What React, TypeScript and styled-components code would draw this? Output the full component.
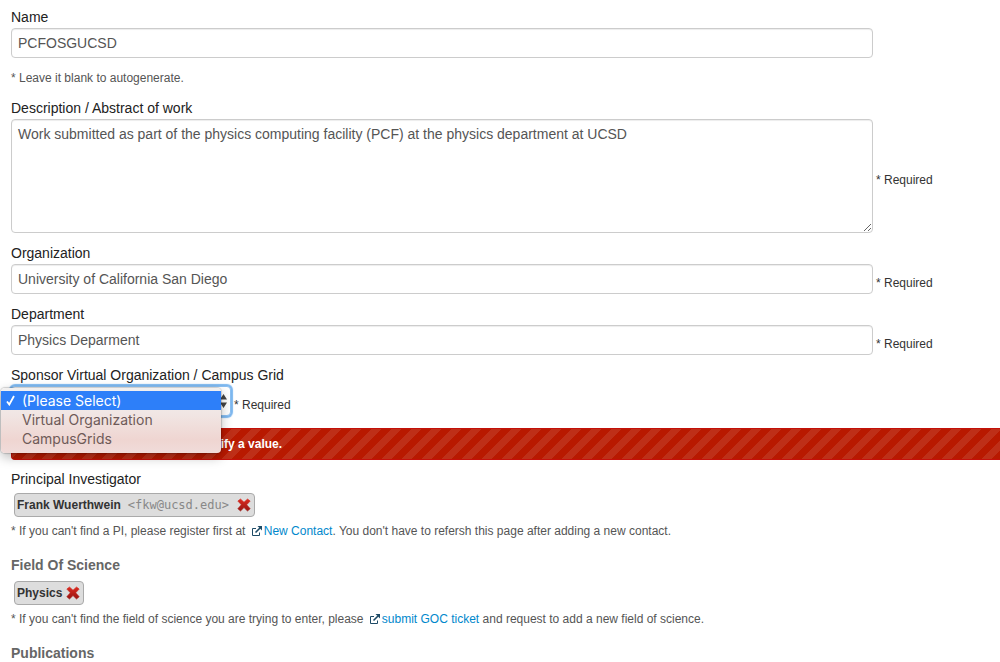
import React, { useState } from "react";
import styled, { createGlobalStyle, css } from "styled-components";

const GlobalStyle = createGlobalStyle`
  *, *::before, *::after { box-sizing: border-box; }
  body {
    margin: 0;
    background: #fff;
    color: #333;
    font-family: "Helvetica Neue", "Liberation Sans", Arial, sans-serif;
    font-size: 14px;
    line-height: 20px;
    overflow-x: hidden;
  }
`;

const Form = styled.form`
  display: flex;
  flex-direction: column;
  padding: 7px 0 0 11px;
`;

const Field = styled.div`
  display: flex;
  flex-direction: column;
  gap: 1px;
  margin-bottom: 10px;
`;

const Label = styled.label`
  align-self: flex-start;
  color: #222;
`;

const ControlRow = styled.div`
  display: flex;
  align-items: center;
  gap: 3px;
`;

const control = css`
  display: block;
  margin: 0;
  border: 1px solid #ccc;
  border-radius: 4px;
  background: #fff;
  color: #555;
  font: inherit;
  padding: 4px 6px;
  box-shadow: inset 0 1px 1px rgba(0, 0, 0, 0.075);
`;

const TextInput = styled.input`
  ${control}
  width: calc(100% - 127px);
  height: 30px;
`;

const TextArea = styled.textarea`
  ${control}
  width: calc(100% - 127px);
  height: 114px;
`;

const Required = styled.span`
  padding-top: 8px;
  font-size: 12px;
  white-space: nowrap;
`;

const Note = styled.p`
  margin: 0;
  font-size: 12px;
  color: #555;
`;

const SelectWrap = styled.div`
  position: relative;
  width: 220px;
`;

const Select = styled.select`
  ${control}
  appearance: none;
  width: 100%;
  height: 30px;
  border-color: #8cc0f2;
  box-shadow: 0 0 1px 2px #7db8f0;
  outline: none;
`;

const SelectArrows = styled.svg`
  position: absolute;
  right: 4px;
  top: 8px;
  pointer-events: none;
`;

const Menu = styled.ul`
  position: absolute;
  z-index: 2;
  top: 2px;
  left: -10px;
  width: 220px;
  margin: 0;
  padding: 3px 0 5px;
  list-style: none;
  border-radius: 4px;
  background: linear-gradient(#f1f0f0 0, #f1e6e4 40%, #efd5d1 80%, #f0dcda 100%);
  box-shadow: 0 0 1px 1px rgba(0, 0, 0, 0.16), 0 4px 12px rgba(0, 0, 0, 0.28);
  font-family: Inter, Roboto, sans-serif;
`;

const MenuItem = styled.li<{ $active: boolean }>`
  display: flex;
  align-items: center;
  height: 19px;
  color: ${(p) => (p.$active ? "#fff" : "#6e5a58")};
  background: ${(p) => (p.$active ? "#2d7ff9" : "transparent")};
`;

const CheckSlot = styled.span`
  display: flex;
  width: 21px;
  padding-left: 5px;
`;

const ErrorBar = styled.div`
  margin: 2px 0 9px;
  padding: 6px 16px;
  border: 1px solid #c4100a;
  border-right: 0;
  border-radius: 4px 0 0 4px;
  background: #b81900
    linear-gradient(
      135deg,
      #be2f18 25%,
      transparent 25%,
      transparent 50%,
      #be2f18 50%,
      #be2f18 75%,
      transparent 75%
    )
    0 0 / 20px 20px;
  color: #fff;
  font-size: 12px;
  font-weight: bold;
  line-height: 18px;
`;

const Section = styled.section`
  margin-bottom: 14px;
`;

const Heading = styled.h2<{ $strong?: boolean }>`
  margin: 0;
  padding-bottom: ${(p) => (p.$strong ? "2px" : "0")};
  font-size: 14px;
  font-weight: ${(p) => (p.$strong ? "bold" : "normal")};
  line-height: 20px;
  color: ${(p) => (p.$strong ? "#666" : "#222")};
`;

const LastHeading = styled(Heading)`
  padding-bottom: 0;
`;

const Chip = styled.div`
  display: flex;
  align-items: center;
  width: fit-content;
  height: 24px;
  margin: 4px 3px;
  padding: 0 3px 0 2px;
  border: 1px solid #aaa;
  border-radius: 4px;
  background: #ddd;
  font-size: 12px;
  font-weight: bold;
`;

const Email = styled.code`
  margin: 0 4px 0 7px;
  color: #888;
  font-family: "DejaVu Sans Mono", monospace;
  font-size: 12px;
  font-weight: normal;
`;

const RemoveButton = styled.button`
  display: flex;
  margin: 0 0 0 4px;
  padding: 0;
  border: 0;
  background: none;
  cursor: pointer;
`;

const Link = styled.a`
  color: #08c;
  text-decoration: none;
`;

const LinkIcon = styled.svg`
  margin: 0 2px 0 3px;
  vertical-align: -1px;
`;

function External() {
  return (
    <LinkIcon width="10" height="10" viewBox="0 0 10 10" fill="none" stroke="#1d4a66" aria-hidden="true">
      <path d="M4 2.500H.5v7h7V6.500" />
      <path d="M3.500 6.500 8 2" strokeWidth="1.600" />
      <path d="M5.500 0H10v4.500z" fill="#1d4a66" stroke="none" />
    </LinkIcon>
  );
}

function Remove({ label }: { label: string }) {
  return (
    <RemoveButton type="button" aria-label={label}>
      <svg width="14" height="14" viewBox="0 0 14 14">
        <defs>
          <linearGradient id="cross" x1="0" y1="0" x2="0" y2="1">
            <stop offset="0" stopColor="#dc2a20" />
            <stop offset="1" stopColor="#981512" />
          </linearGradient>
        </defs>
        <path
          d="M3.500 1 7 4.200 10.500 1 13.200 3 9.700 6.800 13.200 10.700 10.500 13 7 9.600 3.500 13 .8 10.700 4.300 6.800.8 3z"
          fill="url(#cross)"
          stroke="url(#cross)"
          strokeWidth="0.600"
          strokeLinejoin="round"
        />
      </svg>
    </RemoveButton>
  );
}

const sponsors = ["(Please Select)", "Virtual Organization", "CampusGrids"];

export default function App() {
  const [sponsor, setSponsor] = useState(sponsors[0]);
  return (
    <>
      <GlobalStyle />
      <Form>
        <Field>
          <Label htmlFor="name">Name</Label>
          <TextInput id="name" defaultValue="PCFOSGUCSD" />
        </Field>
        <Field>
          <Note>* Leave it blank to autogenerate.</Note>
        </Field>
        <Field>
          <Label htmlFor="description">Description / Abstract of work</Label>
          <ControlRow>
            <TextArea
              id="description"
              defaultValue="Work submitted as part of the physics computing facility (PCF) at the physics department at UCSD"
            />
            <Required>* Required</Required>
          </ControlRow>
        </Field>
        <Field>
          <Label htmlFor="organization">Organization</Label>
          <ControlRow>
            <TextInput id="organization" defaultValue="University of California San Diego" />
            <Required>* Required</Required>
          </ControlRow>
        </Field>
        <Field>
          <Label htmlFor="department">Department</Label>
          <ControlRow>
            <TextInput id="department" defaultValue="Physics Deparment" />
            <Required>* Required</Required>
          </ControlRow>
        </Field>
        <Field>
          <Label htmlFor="sponsor">Sponsor Virtual Organization / Campus Grid</Label>
          <ControlRow>
            <SelectWrap>
              <Select id="sponsor" value={sponsor} onChange={(e) => setSponsor(e.target.value)}>
                {sponsors.map((s) => (
                  <option key={s}>{s}</option>
                ))}
              </Select>
              <SelectArrows width="7" height="14" viewBox="0 0 7 14" fill="#444">
                <path d="M0 5.500 3.500 0 7 5.500zM0 8.500 3.500 14 7 8.500z" />
              </SelectArrows>
              <Menu role="listbox" aria-label="Sponsor">
                {sponsors.map((s) => (
                  <MenuItem
                    key={s}
                    role="option"
                    aria-selected={s === sponsor}
                    $active={s === sponsor}
                    onClick={() => setSponsor(s)}
                  >
                    <CheckSlot>
                      {s === sponsor && (
                        <svg width="9" height="11" viewBox="0 0 9 11" fill="none" stroke="#fff" strokeWidth="1.800">
                          <path d="M1 6.500 3.300 9.500 8 1" />
                        </svg>
                      )}
                    </CheckSlot>
                    {s}
                  </MenuItem>
                ))}
              </Menu>
            </SelectWrap>
            <Required>* Required</Required>
          </ControlRow>
        </Field>
        <ErrorBar role="alert">This field is required. Please specify a value.</ErrorBar>
        <Section>
          <Heading>Principal Investigator</Heading>
          <Chip>
            Frank Wuerthwein <Email>&lt;fkw@ucsd.edu&gt;</Email>
            <Remove label="Remove Frank Wuerthwein" />
          </Chip>
          <Note>
            * If you can't find a PI, please register first at{" "}
            <Link href="#contact"><External />New Contact</Link>. You don't have to refersh this page after adding a
            new contact.
          </Note>
        </Section>
        <Section>
          <Heading $strong>Field Of Science</Heading>
          <Chip>
            Physics <Remove label="Remove Physics" />
          </Chip>
          <Note>
            * If you can't find the field of science you are trying to enter, please{" "}
            <Link href="#ticket"><External />submit GOC ticket</Link> and request to add a new field of science.
          </Note>
        </Section>
        <LastHeading $strong>Publications</LastHeading>
      </Form>
    </>
  );
}
